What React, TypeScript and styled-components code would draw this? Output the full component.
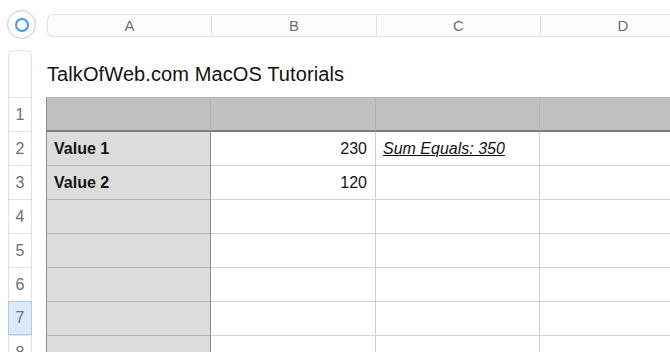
import React from 'react';
import styled, { createGlobalStyle } from 'styled-components';

const GlobalStyle = createGlobalStyle`
  html, body {
    margin: 0;
    padding: 0;
    background: #ffffff;
  }
  body {
    font-family: 'Liberation Sans', Arial, sans-serif;
  }
`;

const COLS = ['A', 'B', 'C', 'D'];
const COL_WIDTHS = [164, 165, 164, 165];
const ROW_H = 34;

const Page = styled.div`
  width: 670px;
  height: 352px;
  overflow: hidden;
  display: grid;
  grid-template-columns: 47px 1fr;
  grid-template-rows: 50px 1fr;
`;

const Corner = styled.div`
  padding: 10px 0 0 7px;
`;

const CircleButton = styled.div`
  width: 29px;
  height: 29px;
  box-sizing: border-box;
  border: 1.5px solid #c9c9c9;
  border-radius: 50%;
  display: flex;
  align-items: center;
  justify-content: center;
  background: #fff;
`;

const Ring = styled.div`
  width: 14px;
  height: 14px;
  box-sizing: border-box;
  border: 2px solid #3c98f7;
  border-radius: 50%;
`;

const ColumnBar = styled.div`
  margin-top: 14px;
  height: 23px;
  display: flex;
  box-sizing: border-box;
  border: 1px solid #e2e2e2;
  border-right: none;
  border-radius: 6px 0 0 6px;
  background: #fcfcfc;
  overflow: hidden;
`;

const ColumnLabel = styled.div<{ $w: number }>`
  flex: 0 0 ${p => p.$w}px;
  box-sizing: border-box;
  border-right: 1px solid #e2e2e2;
  display: flex;
  align-items: center;
  justify-content: center;
  font-size: 15px;
  color: #707070;
`;

const RowGutter = styled.div`
  padding-left: 8px;
`;

const RowBar = styled.div`
  width: 24px;
  box-sizing: border-box;
  border: 1px solid #e2e2e2;
  border-bottom: none;
  border-radius: 6px 6px 0 0;
  background: #fff;
`;

const RowTop = styled.div`
  height: 46px;
`;

const RowLabel = styled.div<{ $active?: boolean }>`
  height: ${ROW_H}px;
  box-sizing: border-box;
  margin: 0 -1px;
  border-top: 1px solid ${p => (p.$active ? '#a9c9f1' : '#e2e2e2')};
  border-bottom: ${p => (p.$active ? '1px solid #a9c9f1' : 'none')};
  border-left: 1px solid ${p => (p.$active ? '#a9c9f1' : '#e2e2e2')};
  border-right: 1px solid ${p => (p.$active ? '#a9c9f1' : '#e2e2e2')};
  background: ${p => (p.$active ? '#dde9fb' : 'transparent')};
  display: flex;
  align-items: center;
  justify-content: center;
  font-size: 16px;
  color: #6f6f6f;
`;

const Sheet = styled.div`
  display: flex;
  flex-direction: column;
`;

const Title = styled.div`
  height: 47px;
  box-sizing: border-box;
  padding-top: 13px;
  font-size: 20px;
  color: #111;
  letter-spacing: 0.1px;
`;

const Table = styled.div`
  display: grid;
  grid-template-columns: ${COL_WIDTHS.map(w => `${w}px`).join(' ')};
  grid-auto-rows: ${ROW_H}px;
  margin-left: -1px;
  border-left: 1px solid #8d8d8d;
  border-top: 1px solid #b4b5b3;
`;

type Kind = 'header' | 'label' | 'body';

const Cell = styled.div<{ $kind: Kind; $right?: boolean }>`
  box-sizing: border-box;
  display: flex;
  align-items: center;
  justify-content: ${p => (p.$right ? 'flex-end' : 'flex-start')};
  padding: 0 8px 0 7px;
  font-size: 16px;
  color: #111;
  background: ${p =>
    p.$kind === 'header' ? '#c1c2c0' : p.$kind === 'label' ? '#dcdcdc' : '#ffffff'};
  border-bottom: ${p =>
    p.$kind === 'header'
      ? '2px solid #7c7d7b'
      : p.$kind === 'label'
      ? '1px solid #b3b3b3'
      : '1px solid #d3d3d3'};
  border-right: ${p =>
    p.$kind === 'header'
      ? '1px solid #b0b1af'
      : p.$kind === 'label'
      ? '1px solid #8d8d8d'
      : '1px solid #cdcdcd'};
`;

const Bold = styled.span`
  font-weight: bold;
`;

const Formula = styled.span`
  font-style: italic;
  text-decoration: underline;
`;

const rows: { label?: string; b?: string; c?: string }[] = [
  { label: 'Value 1', b: '230', c: 'Sum Equals: 350' },
  { label: 'Value 2', b: '120' },
  {},
  {},
  {},
  {},
  {},
];

export default function App() {
  return (
    <Page>
      <GlobalStyle />
      <Corner>
        <CircleButton>
          <Ring />
        </CircleButton>
      </Corner>
      <ColumnBar>
        {COLS.map((c, i) => (
          <ColumnLabel key={c} $w={COL_WIDTHS[i]}>
            {c}
          </ColumnLabel>
        ))}
      </ColumnBar>

      <RowGutter>
        <RowBar>
          <RowTop />
          {[1, 2, 3, 4, 5, 6, 7, 8].map(n => (
            <RowLabel key={n} $active={n === 7}>
              {n}
            </RowLabel>
          ))}
        </RowBar>
      </RowGutter>

      <Sheet>
        <Title>TalkOfWeb.com MacOS Tutorials</Title>
        <Table>
          {COLS.map(c => (
            <Cell key={'h' + c} $kind="header" />
          ))}
          {rows.map((r, i) => (
            <React.Fragment key={i}>
              <Cell $kind="label">{r.label && <Bold>{r.label}</Bold>}</Cell>
              <Cell $kind="body" $right>
                {r.b}
              </Cell>
              <Cell $kind="body">{r.c && <Formula>{r.c}</Formula>}</Cell>
              <Cell $kind="body" />
            </React.Fragment>
          ))}
        </Table>
      </Sheet>
    </Page>
  );
}
